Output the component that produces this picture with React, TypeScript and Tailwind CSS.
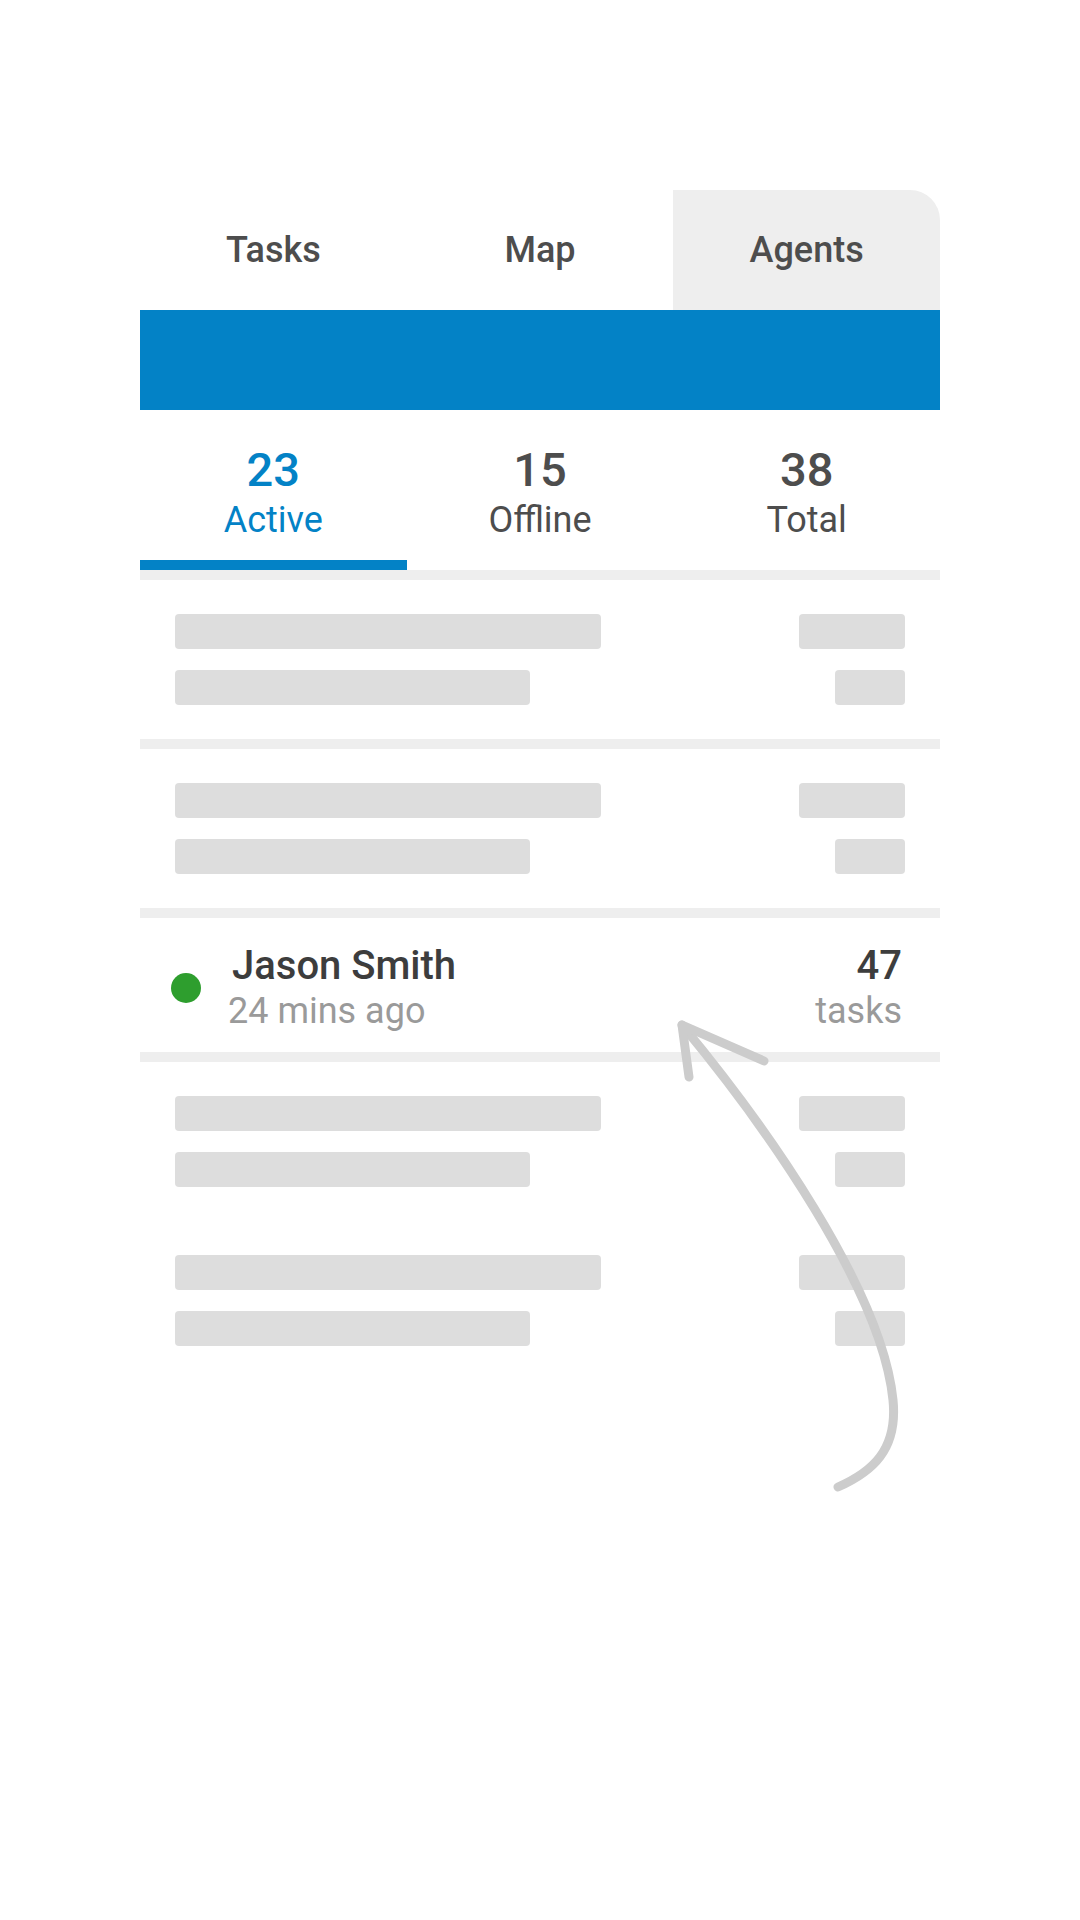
import { useState } from 'react';

const tabs = ['Tasks', 'Map', 'Agents'];

const stats = [
  { value: 23, label: 'Active' },
  { value: 15, label: 'Offline' },
  { value: 38, label: 'Total' },
];

function SkeletonRow() {
  return (
    <div className="flex justify-between px-[35px] py-[34px]">
      <div className="flex flex-col gap-[21px]">
        <div className="h-[35px] w-[426px] rounded-[4px] bg-[#dddddd]" />
        <div className="h-[35px] w-[355px] rounded-[4px] bg-[#dddddd]" />
      </div>
      <div className="flex flex-col items-end gap-[21px]">
        <div className="h-[35px] w-[106px] rounded-[4px] bg-[#dddddd]" />
        <div className="h-[35px] w-[70px] rounded-[4px] bg-[#dddddd]" />
      </div>
    </div>
  );
}

function Divider() {
  return <div className="h-[10px] w-full bg-[#eeeeee]" />;
}

function AgentRow() {
  return (
    <div className="flex h-[134px] items-start justify-between pl-[31px] pr-[38px] pt-[28px]">
      <div className="flex items-start">
        {/* status dot */}
        <div className="mt-[27px] h-[30px] w-[30px] rounded-full bg-[#2e9e2e]" />
        <div className="ml-[27px] flex flex-col">
          <span className="ml-[4px] text-[40px] font-medium leading-none text-[#3d3d3d]">Jason Smith</span>
          <span className="mt-[7px] text-[36px] leading-none text-[#9a9a9a]">24 mins ago</span>
        </div>
      </div>
      <div className="flex flex-col items-end">
        <span className="text-[40px] font-medium leading-none text-[#3d3d3d]">47</span>
        <span className="mt-[7px] text-[36px] leading-none text-[#9a9a9a]">tasks</span>
      </div>
    </div>
  );
}

export default function App() {
  const [activeTab, setActiveTab] = useState('Agents');
  const [activeStat, setActiveStat] = useState('Active');

  return (
    <div
      className="relative min-h-[1920px] w-full bg-white"
      style={{ fontFamily: 'Roboto, "Noto Sans", sans-serif' }}
    >
      <div className="mx-auto w-[800px] pt-[190px]">
        {/* Top tabs */}
        <div className="grid h-[120px] grid-cols-3">
          {tabs.map((tab) => (
            <button
              key={tab}
              onClick={() => setActiveTab(tab)}
              className={`flex items-center justify-center text-[36px] font-medium leading-none text-[#4d4d4d] ${
                activeTab === tab ? 'rounded-tr-[30px] bg-[#eeeeee]' : 'bg-white'
              }`}
            >
              {tab}
            </button>
          ))}
        </div>

        {/* Header bar */}
        <div className="h-[100px] bg-[#0382c6]" />

        {/* Stats */}
        <div className="grid h-[150px] grid-cols-3 pt-[36px]">
          {stats.map((s) => (
            <button
              key={s.label}
              onClick={() => setActiveStat(s.label)}
              className={`flex flex-col items-center ${
                activeStat === s.label ? 'text-[#0382c6]' : 'text-[#4d4d4d]'
              }`}
            >
              <span className="text-[47px] font-medium leading-none">{s.value}</span>
              <span className="mt-[9px] text-[36px] leading-none">{s.label}</span>
            </button>
          ))}
        </div>
        <div className="grid h-[10px] grid-cols-3">
          <div className="bg-[#0382c6]" />
        </div>
        <Divider />

        {/* List */}
        <SkeletonRow />
        <Divider />
        <SkeletonRow />
        <Divider />
        <AgentRow />
        <Divider />
        <SkeletonRow />
        <SkeletonRow />
      </div>

      {/* hand-drawn arrow */}
      <svg
        className="pointer-events-none absolute left-0 top-0"
        width="1080"
        height="1920"
        viewBox="0 0 1080 1920"
        fill="none"
      >
        <path
          d="M 682 1025 C 765 1125, 882 1290, 893 1400 C 898 1450, 872 1472, 838 1487"
          stroke="#cccccc"
          strokeWidth="9"
          strokeLinecap="round"
          strokeLinejoin="round"
        />
        <path
          d="M 764 1061 L 682 1025 L 689 1077"
          stroke="#cccccc"
          strokeWidth="9"
          strokeLinecap="round"
          strokeLinejoin="round"
        />
      </svg>
    </div>
  );
}
